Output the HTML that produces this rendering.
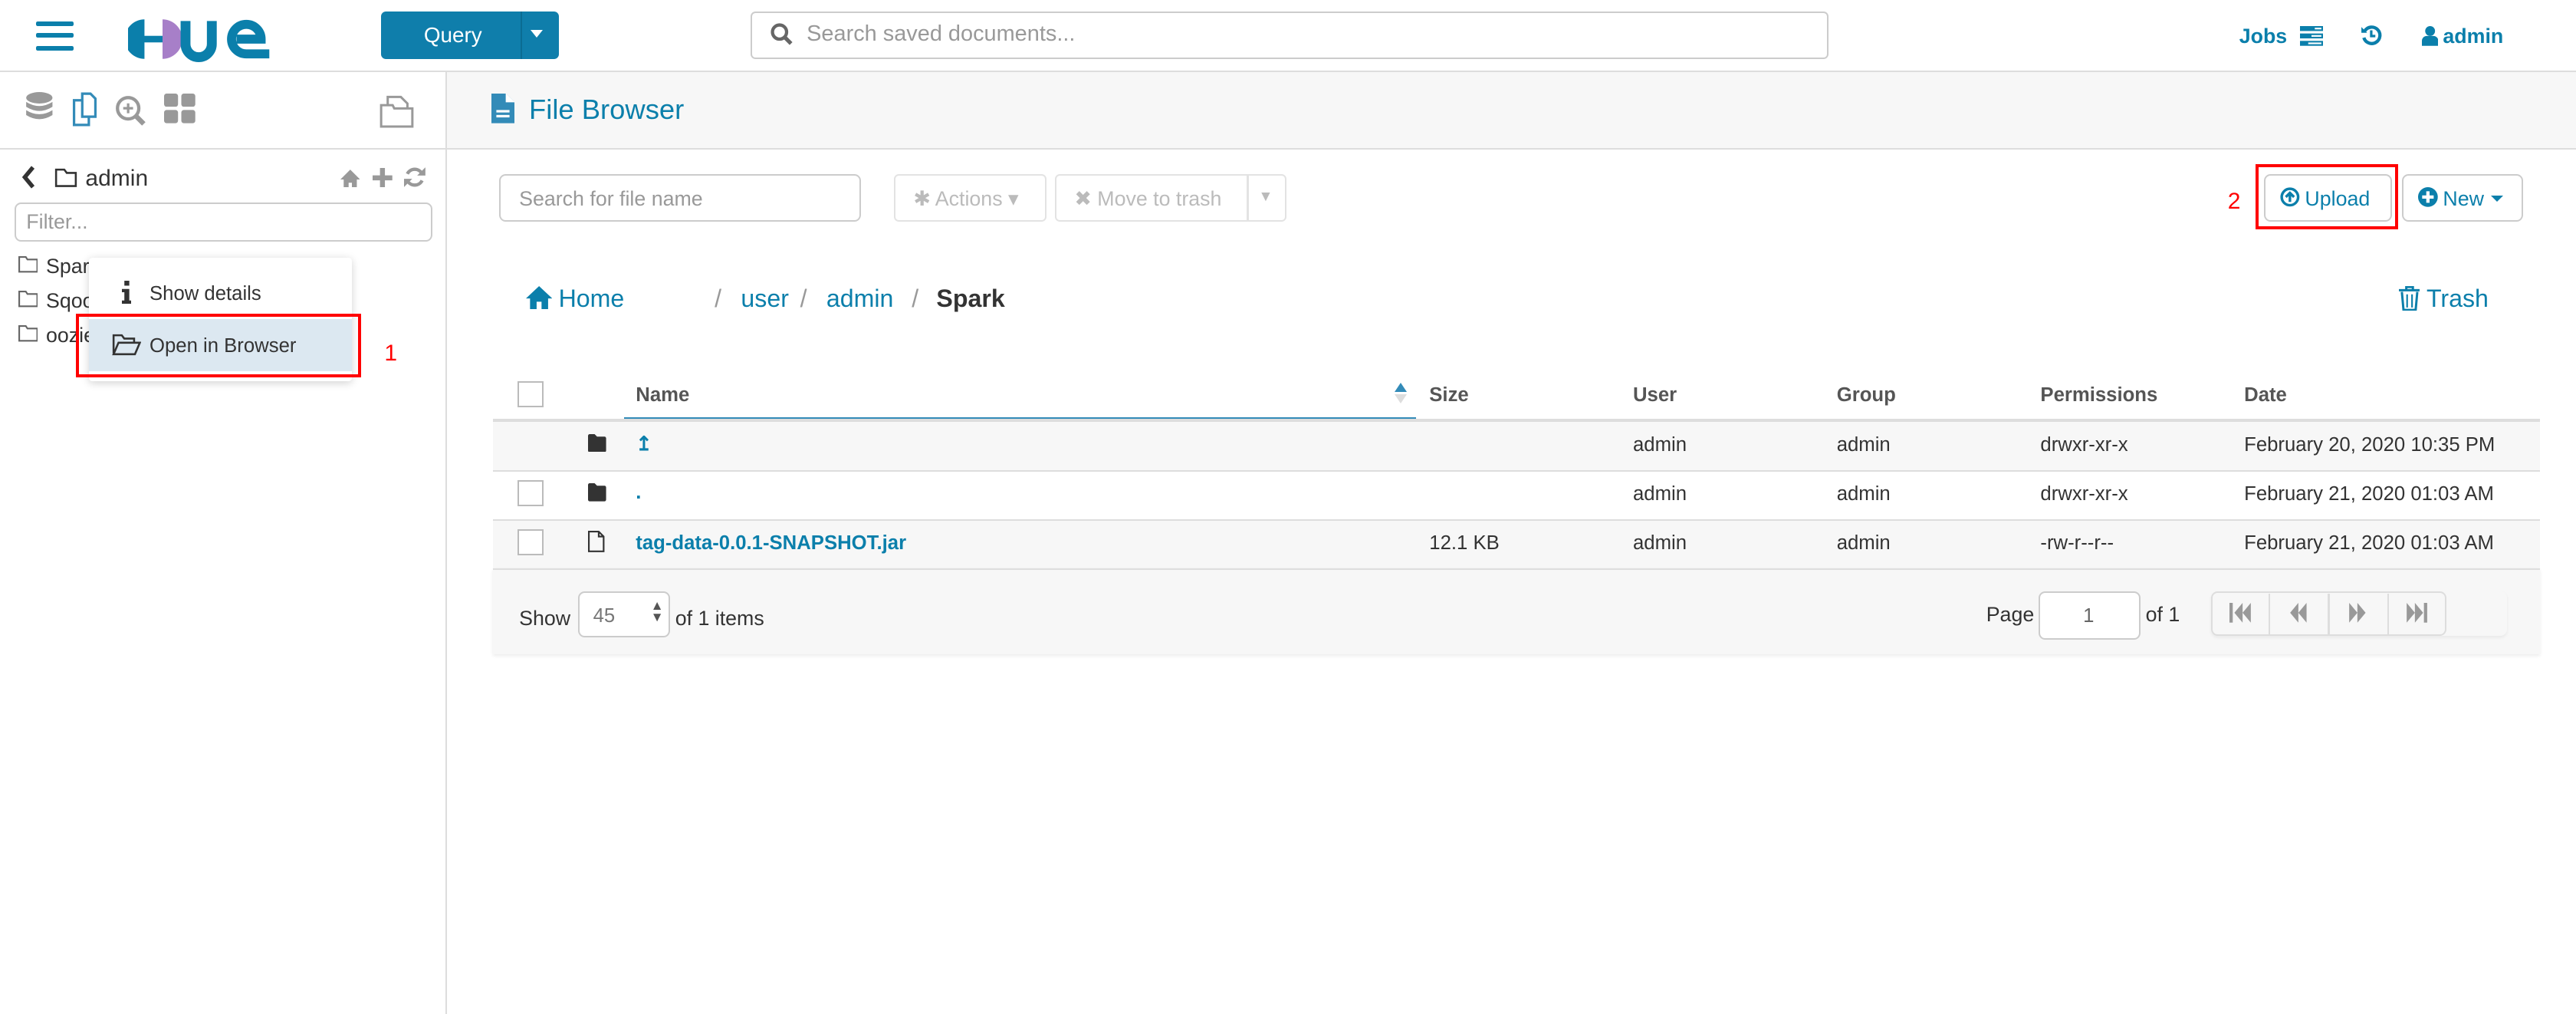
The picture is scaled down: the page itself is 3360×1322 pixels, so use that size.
<!DOCTYPE html>
<html><head><meta charset="utf-8"><style>
html,body{margin:0;padding:0;background:#fff;}
body{width:1568px;height:617px;zoom:2.142857;position:relative;overflow:hidden;font-family:"Liberation Sans",sans-serif;font-size:12px;color:#333;}
.a{position:absolute;white-space:nowrap;}
.blue{color:#0b7fab;}
.btn{position:absolute;border:1px solid #ccc;border-radius:3px;background:#fff;box-sizing:border-box;}
.row{position:absolute;left:300px;width:1246px;height:30px;border-top:1px solid #ddd;box-sizing:border-box;}
.cb{position:absolute;width:14px;height:14px;border:1px solid #bbb;background:#fff;}
.h{font-weight:bold;color:#555;top:234px;}
</style></head><body>
<!-- top bar -->
<div class="a" style="left:0;top:43px;width:1568px;height:1px;background:#ddd"></div>
<div class="a" style="left:22px;top:13px;width:23px;height:3px;background:#0b7fab;border-radius:1px"></div>
<div class="a" style="left:22px;top:20px;width:23px;height:3px;background:#0b7fab;border-radius:1px"></div>
<div class="a" style="left:22px;top:28px;width:23px;height:3px;background:#0b7fab;border-radius:1px"></div>
<svg class="a" style="left:78px;top:10px" width="92" height="28" viewBox="0 0 92 28">
<path d="M10 2 A12 12 0 0 0 10 26 Z" fill="#0b7fab"/><rect x="9" y="12" width="12" height="4" fill="#0b7fab"/>
<path d="M21 2 A12 12 0 0 1 21 26 Z" fill="#a77fc8"/>
<path d="M35 3 v14 a8 8 0 0 0 16 0 v-14" stroke="#0b7fab" stroke-width="6" fill="none"/>
<path d="M86 23 h-14 a9 9 0 1 1 9 -9 h-15" stroke="#0b7fab" stroke-width="5.5" fill="none"/>
</svg>
<div class="a" style="left:232px;top:7px;width:108px;height:29px;background:#0f7eab;border-radius:3px"></div>
<div class="a" style="left:317px;top:7px;width:1px;height:29px;background:#0a6c93"></div>
<div class="a" style="left:258px;top:14px;color:#fff;font-size:13px">Query</div>
<div class="a" style="left:323px;top:18px;width:0;height:0;border-left:4px solid transparent;border-right:4px solid transparent;border-top:5px solid #fff"></div>
<div class="btn" style="left:457px;top:7px;width:656px;height:29px"></div>
<svg class="a" style="left:469px;top:14px" width="14" height="14" viewBox="0 0 14 14"><circle cx="5.5" cy="5.5" r="4.3" stroke="#666" stroke-width="2" fill="none"/><path d="M8.6 8.6 L12.5 12.5" stroke="#666" stroke-width="2.4"/></svg>
<div class="a" style="left:491px;top:13px;color:#999;font-size:13.5px">Search saved documents...</div>
<div class="a blue" style="left:1363px;top:15px;font-weight:bold;font-size:12.5px">Jobs</div>
<svg class="a" style="left:1400px;top:16px" width="14" height="12"><rect x="0" y="0" width="14" height="3" fill="#0b7fab"/><rect x="0" y="4.5" width="14" height="3" fill="#0b7fab"/><rect x="0" y="9" width="14" height="3" fill="#0b7fab"/><rect x="9" y="1" width="4" height="1" fill="#fff"/><rect x="7" y="5.5" width="6" height="1" fill="#fff"/><rect x="5" y="10" width="8" height="1" fill="#fff"/></svg>
<svg class="a" style="left:1437px;top:15px" width="13" height="13" viewBox="0 0 13 13"><path d="M2.5 4 A5 5 0 1 1 2 8" stroke="#0b7fab" stroke-width="2" fill="none"/><path d="M0.5 1.5 L4 5 L0.5 5 Z" fill="#0b7fab"/><path d="M6.5 3.5 V7 H9" stroke="#0b7fab" stroke-width="1.5" fill="none"/></svg>
<svg class="a" style="left:1474px;top:16px" width="10" height="12"><circle cx="5" cy="3" r="3" fill="#0b7fab"/><path d="M0 12 v-3 a3 3 0 0 1 3 -3 h4 a3 3 0 0 1 3 3 v3z" fill="#0b7fab"/></svg>
<div class="a blue" style="left:1487px;top:15px;font-weight:bold;font-size:12.5px">admin</div>

<!-- sidebar -->
<div class="a" style="left:271px;top:44px;width:1px;height:573px;background:#ddd"></div>
<div class="a" style="left:0;top:90px;width:271px;height:1px;background:#ddd"></div>
<svg class="a" style="left:15px;top:56px" width="18" height="20"><ellipse cx="9" cy="3.5" rx="8" ry="3.5" fill="#999"/><path d="M1 6 q8 5 16 0 v3 q-8 5 -16 0z M1 11 q8 5 16 0 v3 q-8 5 -16 0z" fill="#999"/></svg>
<svg class="a" style="left:41px;top:56px" width="22" height="22"><path d="M4 5 h6 l3 3 v12 h-9z" stroke="#338bb8" stroke-width="1.5" fill="none"/><path d="M9 1 h5 l3 3 v11 h-8z" stroke="#338bb8" stroke-width="1.5" fill="#fff"/></svg>
<svg class="a" style="left:70px;top:58px" width="20" height="20"><circle cx="8" cy="8" r="6.5" stroke="#999" stroke-width="2" fill="none"/><path d="M8 5 v6 M5 8 h6" stroke="#999" stroke-width="1.5"/><path d="M12.5 12.5 L17.5 17.5" stroke="#999" stroke-width="3"/></svg>
<svg class="a" style="left:100px;top:57px" width="20" height="18"><rect x="0" y="0" width="8.5" height="8" rx="1.5" fill="#999"/><rect x="10.5" y="0" width="8.5" height="8" rx="1.5" fill="#999"/><rect x="0" y="10" width="8.5" height="8" rx="1.5" fill="#999"/><rect x="10.5" y="10" width="8.5" height="8" rx="1.5" fill="#999"/></svg>
<svg class="a" style="left:231px;top:56px" width="22" height="22"><path d="M1 8 h7 l1 2 h11 v11 h-19z" stroke="#999" stroke-width="1.4" fill="none"/><path d="M5 8 v-5 h8 l4 4 v3" stroke="#999" stroke-width="1.4" fill="none"/></svg>

<svg class="a" style="left:13px;top:101px" width="9" height="14"><path d="M7 1 L2 7 L7 13" stroke="#333" stroke-width="2.5" fill="none"/></svg>
<svg class="a" style="left:33px;top:102px" width="14" height="12"><path d="M1 1 h5 l1.5 2 h5.5 v8 h-12z" stroke="#333" stroke-width="1.2" fill="none"/></svg>
<div class="a" style="left:52px;top:101px;font-size:14px;color:#333">admin</div>
<svg class="a" style="left:207px;top:102px" width="12" height="12"><path d="M6 1 L12 7 h-2 v5 h-3 v-3 h-2 v3 h-3 v-5 h-2z" fill="#999"/></svg>
<svg class="a" style="left:227px;top:102px" width="12" height="12"><path d="M6 0 v12 M0 6 h12" stroke="#999" stroke-width="3"/></svg>
<svg class="a" style="left:246px;top:101px" width="13" height="14"><path d="M11 5 A5 5 0 0 0 2 5 M2 9 A5 5 0 0 0 11 9" stroke="#999" stroke-width="2" fill="none"/><path d="M13 1 v5 h-5z M0 13 v-5 h5z" fill="#999"/></svg>
<div class="btn" style="left:9px;top:123px;width:254px;height:24px;border-radius:4px"></div>
<div class="a" style="left:16px;top:128px;color:#999;font-size:12.5px">Filter...</div>
<svg class="a" style="left:11px;top:156px" width="12" height="10"><path d="M0.5 0.5 h4 l1 1.5 h6 v7.5 h-11z" stroke="#666" fill="none"/></svg>
<div class="a" style="left:28px;top:155px;font-size:12.5px">Spark</div>
<svg class="a" style="left:11px;top:177px" width="12" height="10"><path d="M0.5 0.5 h4 l1 1.5 h6 v7.5 h-11z" stroke="#666" fill="none"/></svg>
<div class="a" style="left:28px;top:176px;font-size:12.5px">Sqoop</div>
<svg class="a" style="left:11px;top:198px" width="12" height="10"><path d="M0.5 0.5 h4 l1 1.5 h6 v7.5 h-11z" stroke="#666" fill="none"/></svg>
<div class="a" style="left:28px;top:197px;font-size:12.5px">oozie</div>

<!-- context menu -->
<div class="a" style="left:54px;top:157px;width:160px;height:75px;background:#fff;box-shadow:0 1px 5px rgba(0,0,0,.18);border-radius:2px"></div>
<svg class="a" style="left:74px;top:171px" width="6" height="14"><rect x="1.5" y="0" width="3" height="3" fill="#333"/><path d="M0 5 h4.5 v7 h1.5 v2 h-6 v-2 h1.5 v-5 h-1.5z" fill="#333"/></svg>
<div class="a" style="left:91px;top:172px;font-size:12px">Show details</div>
<div class="a" style="left:54px;top:194px;width:160px;height:32px;background:#dce8f1"></div>
<svg class="a" style="left:68px;top:203px" width="18" height="14"><path d="M1 12 v-11 h5 l1.5 2 h6 v2.5" stroke="#333" stroke-width="1.2" fill="none"/><path d="M1 12.5 l3 -7 h13 l-3 7z" stroke="#333" stroke-width="1.2" fill="none"/></svg>
<div class="a" style="left:91px;top:204px;font-size:12px">Open in Browser</div>
<div class="a" style="left:46px;top:191px;width:170px;height:35px;border:2px solid #f00"></div>
<div class="a" style="left:234px;top:207px;color:#f00;font-size:14px">1</div>

<!-- main header -->
<div class="a" style="left:272px;top:44px;width:1296px;height:46px;background:#f7f7f7;border-bottom:1px solid #ddd"></div>
<svg class="a" style="left:299px;top:57px" width="14" height="18"><path d="M0 0 h9 l5 5 v13 h-14z" fill="#338bb8"/><path d="M9 0 v5 h5" fill="#fff" stroke="#fff" stroke-width=".6"/><rect x="3" y="10" width="8" height="1.5" fill="#fff"/><rect x="3" y="13" width="8" height="1.5" fill="#fff"/></svg>
<div class="a" style="left:322px;top:57px;font-size:17px;color:#0b7fab">File Browser</div>

<!-- toolbar -->
<div class="btn" style="left:304px;top:106px;width:220px;height:29px;border-radius:4px"></div>
<div class="a" style="left:316px;top:114px;color:#999;font-size:12.5px">Search for file name</div>
<div class="btn" style="left:544px;top:106px;width:93px;height:29px;border-color:#e3e3e3"></div>
<div class="a" style="left:556px;top:114px;color:#bbb;font-size:12.5px">✱ Actions ▾</div>
<div class="btn" style="left:642px;top:106px;width:141px;height:29px;border-color:#e3e3e3"></div>
<div class="a" style="left:759px;top:107px;width:1px;height:27px;background:#e3e3e3"></div>
<div class="a" style="left:654px;top:114px;color:#bbb;font-size:12.5px">✖ Move to trash</div>
<div class="a" style="left:766px;top:115px;color:#bbb;font-size:9px">▼</div>
<div class="a" style="left:1356px;top:115px;color:#f00;font-size:14px">2</div>
<div class="btn" style="left:1378px;top:106px;width:78px;height:29px;border-radius:4px"></div>
<svg class="a" style="left:1388px;top:114px" width="12" height="12"><circle cx="6" cy="6" r="5" stroke="#0b7fab" stroke-width="1.6" fill="none"/><path d="M6 9 v-5.5 M3.5 6 L6 3.5 L8.5 6" stroke="#0b7fab" stroke-width="1.6" fill="none"/></svg>
<div class="a blue" style="left:1403px;top:114px;font-size:12.5px">Upload</div>
<div class="a" style="left:1373px;top:100px;width:83px;height:36px;border:2px solid #f00"></div>
<div class="btn" style="left:1462px;top:106px;width:74px;height:29px;border-radius:4px"></div>
<svg class="a" style="left:1472px;top:114px" width="12" height="12"><circle cx="6" cy="6" r="6" fill="#0b7fab"/><path d="M6 2.5 v7 M2.5 6 h7" stroke="#fff" stroke-width="2"/></svg>
<div class="a blue" style="left:1487px;top:114px;font-size:12.5px">New</div>
<div class="a" style="left:1516px;top:119px;border-left:4px solid transparent;border-right:4px solid transparent;border-top:4px solid #0b7fab"></div>

<!-- breadcrumb -->
<svg class="a" style="left:320px;top:174px" width="16" height="14"><path d="M8 0 L16 7.5 h-2.5 v6.5 h-4 v-4.5 h-3 v4.5 h-4 v-6.5 h-2.5z" fill="#0b7fab"/></svg>
<div class="a blue" style="left:340px;top:173px;font-size:15px">Home</div>
<div class="a" style="left:435px;top:173px;font-size:15px;color:#999">/</div>
<div class="a blue" style="left:451px;top:173px;font-size:15px">user</div>
<div class="a" style="left:487px;top:173px;font-size:15px;color:#999">/</div>
<div class="a blue" style="left:503px;top:173px;font-size:15px">admin</div>
<div class="a" style="left:555px;top:173px;font-size:15px;color:#999">/</div>
<div class="a" style="left:570px;top:173px;font-size:15px;font-weight:bold;color:#333">Spark</div>
<svg class="a" style="left:1460px;top:174px" width="13" height="15"><path d="M0 2.5 h13 M4.5 2.5 v-2 h4 v2" stroke="#0b7fab" stroke-width="1.4" fill="none"/><path d="M1.8 3.5 l1 11 h7.4 l1 -11" stroke="#0b7fab" stroke-width="1.4" fill="none"/><path d="M5 5 v8 M8 5 v8" stroke="#0b7fab"/></svg>
<div class="a blue" style="left:1477px;top:173px;font-size:15px">Trash</div>

<!-- table -->
<div class="cb" style="left:315px;top:232px"></div>
<div class="a h" style="left:387px">Name</div>
<div class="a" style="left:380px;top:254px;width:482px;height:2px;background:#338bb8"></div>
<div class="a" style="left:849px;top:233px;border-left:4px solid transparent;border-right:4px solid transparent;border-bottom:6px solid #338bb8"></div>
<div class="a" style="left:849px;top:240px;border-left:4px solid transparent;border-right:4px solid transparent;border-top:6px solid #ddd"></div>
<div class="a h" style="left:870px">Size</div>
<div class="a h" style="left:994px">User</div>
<div class="a h" style="left:1118px">Group</div>
<div class="a h" style="left:1242px">Permissions</div>
<div class="a h" style="left:1366px">Date</div>

<div class="row" style="top:255px;background:#f7f7f7;border-top:2px solid #ddd;height:31px"></div>
<div class="row" style="top:286px;background:#fff"></div>
<div class="row" style="top:316px;background:#f7f7f7"></div>
<div class="row" style="top:346px;height:52px;background:#f7f7f7;box-shadow:0 1px 2px rgba(0,0,0,.08)"></div>

<svg class="a" style="left:358px;top:264px" width="11" height="11"><path d="M0 1 a1 1 0 0 1 1 -1 h3 l1.5 1.5 h4.5 a1 1 0 0 1 1 1 v7.5 a1 1 0 0 1 -1 1 h-9 a1 1 0 0 1 -1 -1z" fill="#333"/></svg>
<div class="a blue" style="left:387px;top:263px;font-weight:bold">↥</div>
<div class="a" style="left:994px;top:264px">admin</div><div class="a" style="left:1118px;top:264px">admin</div><div class="a" style="left:1242px;top:264px">drwxr-xr-x</div><div class="a" style="left:1366px;top:264px">February 20, 2020 10:35 PM</div>

<div class="cb" style="left:315px;top:292px"></div>
<svg class="a" style="left:358px;top:294px" width="11" height="11"><path d="M0 1 a1 1 0 0 1 1 -1 h3 l1.5 1.5 h4.5 a1 1 0 0 1 1 1 v7.5 a1 1 0 0 1 -1 1 h-9 a1 1 0 0 1 -1 -1z" fill="#333"/></svg>
<div class="a blue" style="left:387px;top:293px;font-weight:bold">.</div>
<div class="a" style="left:994px;top:294px">admin</div><div class="a" style="left:1118px;top:294px">admin</div><div class="a" style="left:1242px;top:294px">drwxr-xr-x</div><div class="a" style="left:1366px;top:294px">February 21, 2020 01:03 AM</div>

<div class="cb" style="left:315px;top:322px"></div>
<svg class="a" style="left:358px;top:323px" width="10" height="13"><path d="M0.5 0.5 h6 l3 3 v9 h-9z M6.5 0.5 v3 h3" stroke="#333" fill="none"/></svg>
<div class="a blue" style="left:387px;top:324px;font-weight:bold">tag-data-0.0.1-SNAPSHOT.jar</div>
<div class="a" style="left:870px;top:324px">12.1 KB</div>
<div class="a" style="left:994px;top:324px">admin</div><div class="a" style="left:1118px;top:324px">admin</div><div class="a" style="left:1242px;top:324px">-rw-r--r--</div><div class="a" style="left:1366px;top:324px">February 21, 2020 01:03 AM</div>

<!-- footer -->
<div class="a" style="left:316px;top:369px;font-size:12.5px">Show</div>
<div class="btn" style="left:352px;top:360px;width:56px;height:28px;border-radius:4px"></div>
<div class="a" style="left:361px;top:368px;color:#777">45</div>
<div class="a" style="left:396px;top:365px;color:#555;font-size:8px;line-height:7px">▲<br>▼</div>
<div class="a" style="left:411px;top:369px;font-size:12.5px">of 1 items</div>
<div class="a" style="left:1209px;top:367px;font-size:12.5px">Page</div>
<div class="btn" style="left:1241px;top:360px;width:62px;height:29px;border-radius:4px"></div>
<div class="a" style="left:1268px;top:368px;color:#666">1</div>
<div class="a" style="left:1306px;top:367px;font-size:12.5px">of 1</div>
<div class="a" style="left:1346px;top:360px;width:180px;height:27px;border-radius:4px;box-shadow:0 1px 2px rgba(0,0,0,.06);background:#f7f7f7"></div>
<div class="btn" style="left:1346px;top:360px;width:143px;height:27px;border-radius:4px;background:#f7f7f7;border-color:#ddd"></div>
<div class="a" style="left:1381px;top:361px;width:1px;height:25px;background:#ddd"></div>
<div class="a" style="left:1417px;top:361px;width:1px;height:25px;background:#ddd"></div>
<div class="a" style="left:1453px;top:361px;width:1px;height:25px;background:#ddd"></div>
<svg class="a" style="left:1357px;top:367px" width="14" height="12"><rect x="0" y="0" width="2" height="12" fill="#999"/><path d="M8 0 L3 6 L8 12z M13 0 L8 6 L13 12z" fill="#999"/></svg>
<svg class="a" style="left:1393px;top:367px" width="12" height="12"><path d="M6 0 L1 6 L6 12z M11 0 L6 6 L11 12z" fill="#999"/></svg>
<svg class="a" style="left:1429px;top:367px" width="12" height="12"><path d="M1 0 L6 6 L1 12z M6 0 L11 6 L6 12z" fill="#999"/></svg>
<svg class="a" style="left:1464px;top:367px" width="14" height="12"><path d="M1 0 L6 6 L1 12z M6 0 L11 6 L6 12z" fill="#999"/><rect x="11.5" y="0" width="2" height="12" fill="#999"/></svg>
</body></html>
